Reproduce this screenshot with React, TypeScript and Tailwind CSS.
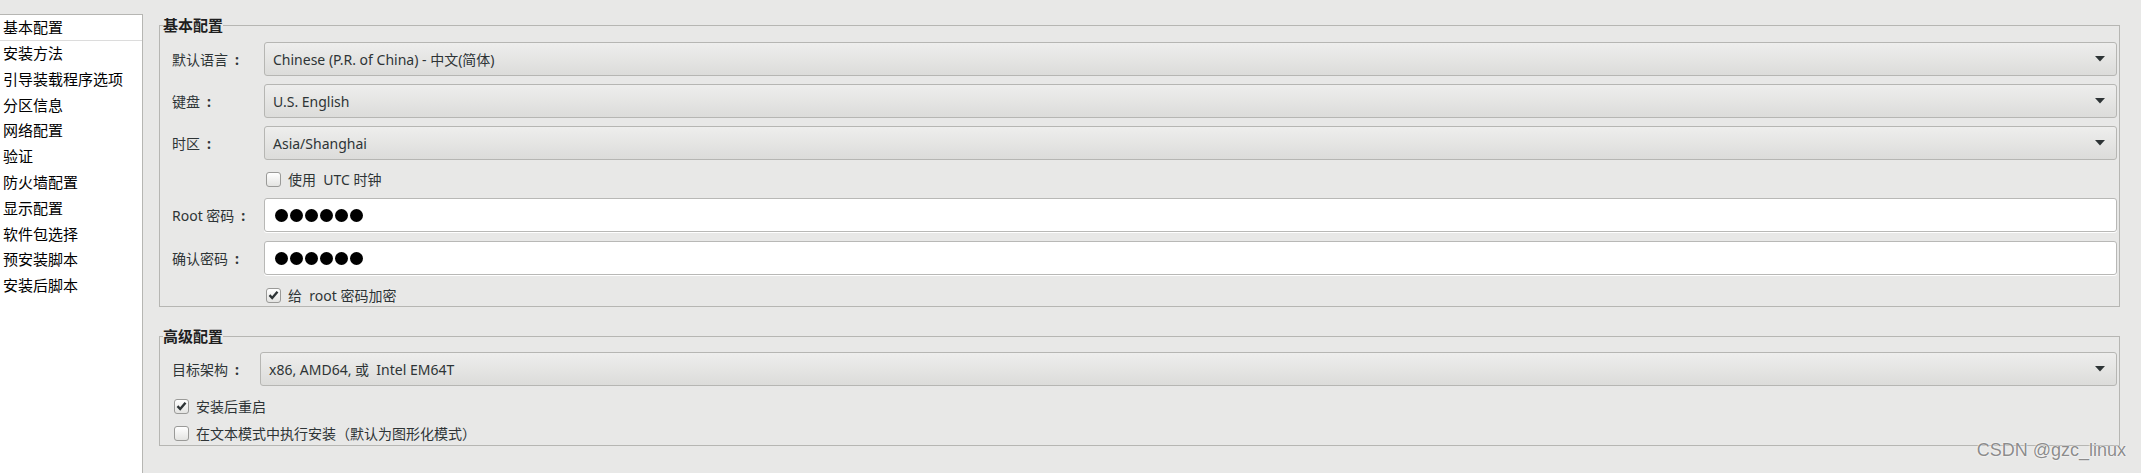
import type { ReactNode } from "react";

const sidebarItems = [
  "基本配置",
  "安装方法",
  "引导装载程序选项",
  "分区信息",
  "网络配置",
  "验证",
  "防火墙配置",
  "显示配置",
  "软件包选择",
  "预安装脚本",
  "安装后脚本",
];

const font = "font-['Noto_Sans','Noto_Sans_CJK_SC',sans-serif]";

function Combo({ value }: { value: string }) {
  return (
    <div className="flex h-[34px] flex-1 items-center justify-between rounded-[3px] border border-[#b6b6b3] bg-linear-to-b from-[#eeeeed] to-[#dcdcda] pl-[8px] pr-[11px] text-[14px] text-[#2e3436]">
      <span className="whitespace-pre">{value}</span>
      <svg width="10" height="6" viewBox="0 0 10 6">
        <path d="M0 0h10L5 5.5z" fill="#2e3436" />
      </svg>
    </div>
  );
}

function Password() {
  return (
    <div className="flex h-[34px] flex-1 items-center gap-[2px] rounded-[3px] border border-[#b8b8b6] bg-white pl-[10px] shadow-[0_1px_0_#ffffff]">
      {[0, 1, 2, 3, 4, 5].map((i) => (
        <span key={i} className="h-[13px] w-[13px] rounded-full bg-black" />
      ))}
    </div>
  );
}

function Check({ checked, children }: { checked?: boolean; children: ReactNode }) {
  return (
    <div className="flex items-center gap-[7px] text-[14px] text-[#2e3436]">
      <span className="flex h-[15px] w-[15px] items-center justify-center rounded-[3px] border border-[#9a9a98] bg-linear-to-b from-white to-[#e4e4e2]">
        {checked && (
          <svg width="11" height="10" viewBox="0 0 11 10">
            <path d="M1.5 5.2 4.2 8 9.5 1.8" fill="none" stroke="#2e3436" strokeWidth="2.4" />
          </svg>
        )}
      </span>
      <span className="whitespace-pre">{children}</span>
    </div>
  );
}

function Row({ label, width, children, className = "" }: { label: string; width: string; children: ReactNode; className?: string }) {
  return (
    <div className={`flex items-center ${className}`}>
      <span className={`${width} shrink-0 text-[14px] text-[#2e3436]`}>
        {label}
        <span className="ml-[7px] font-bold">:</span>
      </span>
      {children}
    </div>
  );
}

function Group({ title, children, className = "" }: { title: string; children: ReactNode; className?: string }) {
  return (
    <fieldset className={`border border-[#b6b6b3] ${className}`}>
      <legend className="ml-[3px] text-[15px] font-bold leading-[20px] text-[#1f1f1f]">{title}</legend>
      {children}
    </fieldset>
  );
}

export default function App() {
  return (
    <div className={`relative flex h-[473px] w-[2141px] overflow-hidden bg-[#e8e8e7] ${font}`}>
      <aside className="mt-[14px] w-[143px] shrink-0 border-t border-r border-[#b6b6b3] bg-white">
        {sidebarItems.map((item, i) => (
          <div
            key={item}
            className={`pl-[3px] text-[15px] text-black ${i === 0 ? "h-[26px] border-b border-[#dcdcdc] leading-[25px]" : "h-[25.8px] leading-[25.8px]"}`}
          >
            {item}
          </div>
        ))}
      </aside>

      <main className="flex flex-1 flex-col pl-[16px] pr-[21px] pt-[15px]">
        <Group title="基本配置">
          <div className="flex flex-col pl-[12px] pr-[2px] pt-[7px] pb-[1px]">
            <Row label="默认语言" width="w-[92px]">
              <Combo value="Chinese (P.R. of China) - 中文(简体)" />
            </Row>
            <Row label="键盘" width="w-[92px]" className="mt-[8px]">
              <Combo value="U.S. English" />
            </Row>
            <Row label="时区" width="w-[92px]" className="mt-[8px]">
              <Combo value="Asia/Shanghai" />
            </Row>
            <div className="mt-[8px] flex h-[22px] items-center pl-[94px]">
              <Check>{"使用  UTC 时钟"}</Check>
            </div>
            <Row label="Root 密码" width="w-[92px]" className="mt-[8px]">
              <Password />
            </Row>
            <Row label="确认密码" width="w-[92px]" className="mt-[9px]">
              <Password />
            </Row>
            <div className="mt-[10px] flex h-[20px] items-center pl-[94px]">
              <Check checked>{"给  root 密码加密"}</Check>
            </div>
          </div>
        </Group>

        <Group title="高级配置" className="mt-[19px]">
          <div className="flex flex-col pl-[12px] pr-[2px] pt-[6px] pb-[2px]">
            <Row label="目标架构" width="w-[88px]">
              <Combo value="x86, AMD64, 或  Intel EM64T" />
            </Row>
            <div className="mt-[10px] flex h-[20px] items-center pl-[2px]">
              <Check checked>安装后重启</Check>
            </div>
            <div className="mt-[7px] flex h-[20px] items-center pl-[2px]">
              <Check>在文本模式中执行安装（默认为图形化模式）</Check>
            </div>
          </div>
        </Group>
      </main>

      <span className="absolute right-[15px] bottom-[9px] font-['Liberation_Sans',sans-serif] text-[18px] text-[#8c8c8c] [text-shadow:0_0_2px_#ffffff,0_0_1px_#ffffff]">
        CSDN @gzc_linux
      </span>
    </div>
  );
}
